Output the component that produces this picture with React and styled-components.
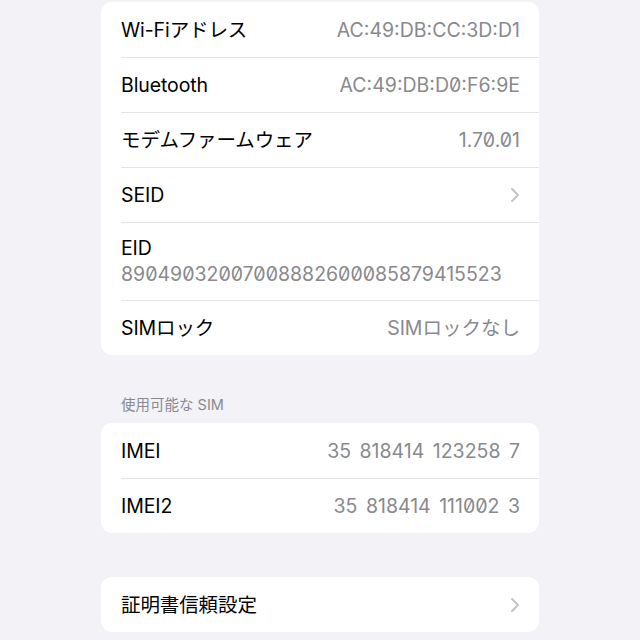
import styled, { createGlobalStyle } from "styled-components";

const GlobalStyle = createGlobalStyle`
  html, body {
    margin: 0;
    padding: 0;
    background: #f2f2f7;
  }
  body {
    font-family: Inter, "Noto Sans CJK JP", sans-serif;
    -webkit-font-smoothing: antialiased;
  }
`;

const Page = styled.div`
  width: 640px;
  height: 640px;
  overflow: hidden;
  padding: 2px 101px 0;
  box-sizing: border-box;
  display: flex;
  flex-direction: column;
`;

const Card = styled.div`
  background: #ffffff;
  border-radius: 11px;
  margin-top: ${(p) => p.$gap || 0}px;
  overflow: hidden;
`;

const Row = styled.div`
  height: ${(p) => (p.$tall ? 78 : 55)}px;
  padding: 0 19px 0 20px;
  display: flex;
  flex-direction: ${(p) => (p.$tall ? "column" : "row")};
  justify-content: ${(p) => (p.$tall ? "center" : "space-between")};
  align-items: ${(p) => (p.$tall ? "flex-start" : "center")};
  gap: ${(p) => (p.$tall ? 2 : 0)}px;
  position: relative;

  &:not(:first-child)::before {
    content: "";
    position: absolute;
    top: 0;
    left: 20px;
    right: 0;
    height: 1px;
    background: #e4e4e8;
  }
`;

const Label = styled.span`
  font-size: 19.5px;
  color: #000;
  line-height: 24px;
  letter-spacing: -0.1px;
`;

const Value = styled.span`
  font-size: 19.5px;
  color: #89898e;
  line-height: 24px;
  font-feature-settings: "zero";
  word-spacing: ${(p) => p.$wordSpacing || 0}px;
`;

const SectionHeader = styled.div`
  margin: 40px 0 8px 20px;
  font-size: 14.5px;
  line-height: 20px;
  color: #8a8a8e;
`;

const Chevron = () => (
  <svg width="10" height="16" viewBox="0 0 10 16" fill="none">
    <path
      d="M2 2l6 6-6 6"
      stroke="#c4c4c8"
      strokeWidth="2"
      strokeLinecap="round"
      strokeLinejoin="round"
    />
  </svg>
);

const ChevronWrap = styled.span`
  display: flex;
`;

export default function App() {
  return (
    <>
      <GlobalStyle />
      <Page>
        <Card>
          <Row>
            <Label>Wi-Fiアドレス</Label>
            <Value>AC:49:DB:CC:3D:D1</Value>
          </Row>
          <Row>
            <Label>Bluetooth</Label>
            <Value>AC:49:DB:D0:F6:9E</Value>
          </Row>
          <Row>
            <Label>モデムファームウェア</Label>
            <Value>1.70.01</Value>
          </Row>
          <Row>
            <Label>SEID</Label>
            <ChevronWrap>
              <Chevron />
            </ChevronWrap>
          </Row>
          <Row $tall>
            <Label>EID</Label>
            <Value>89049032007008882600085879415523</Value>
          </Row>
          <Row>
            <Label>SIMロック</Label>
            <Value>SIMロックなし</Value>
          </Row>
        </Card>

        <SectionHeader>使用可能な SIM</SectionHeader>
        <Card>
          <Row>
            <Label>IMEI</Label>
            <Value $wordSpacing={3}>35 818414 123258 7</Value>
          </Row>
          <Row>
            <Label>IMEI2</Label>
            <Value $wordSpacing={3}>35 818414 111002 3</Value>
          </Row>
        </Card>

        <Card $gap={44}>
          <Row>
            <Label>証明書信頼設定</Label>
            <ChevronWrap>
              <Chevron />
            </ChevronWrap>
          </Row>
        </Card>
      </Page>
    </>
  );
}
